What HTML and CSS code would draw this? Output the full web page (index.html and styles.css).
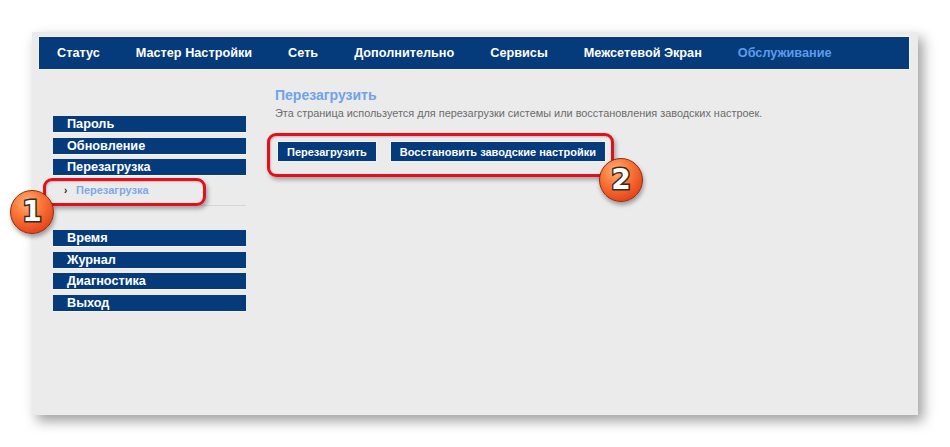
FILE: index.html
```html
<!DOCTYPE html>
<html lang="ru">
<head>
    <meta charset="UTF-8">
    <title>Перезагрузить</title>
    <link rel="stylesheet" href="styles.css">
</head>
<body>

    <div class="screen">
        <div class="panel">
            <div class="top-nav">
                <div class="nav-item">Статус</div>
                <div class="nav-item">Мастер Настройки</div>
                <div class="nav-item">Сеть</div>
                <div class="nav-item">Дополнительно</div>
                <div class="nav-item">Сервисы</div>
                <div class="nav-item">Межсетевой Экран</div>
                <div class="nav-item active">Обслуживание</div>
            </div>

            <div class="body-row">
                <div class="sidebar">
                    <div class="side-item">Пароль</div>
                    <div class="side-item">Обновление</div>
                    <div class="side-item">Перезагрузка</div>
                    <div class="sub-item">
                        <span class="sub-bullet">›</span>
                        <span class="sub-text">Перезагрузка</span>
                    </div>
                    <div class="side-sep"></div>
                    <div class="side-item">Время</div>
                    <div class="side-item">Журнал</div>
                    <div class="side-item">Диагностика</div>
                    <div class="side-item">Выход</div>
                </div>

                <div class="content">
                    <div class="page-title">Перезагрузить</div>
                    <div class="page-desc">Эта страница используется для перезагрузки системы или восстановления заводских настроек.</div>
                    <div class="btn-row">
                        <button class="btn">Перезагрузить</button>
                        <button class="btn">Восстановить заводские настройки</button>
                    </div>
                </div>
            </div>
        </div>

        <!-- annotation overlays -->
        <div class="mark mark-one"></div>
        <div class="mark mark-two"></div>
        <div class="badge badge-one"><span>1</span></div>
        <div class="badge badge-two"><span>2</span></div>
    </div>

</body>
</html>
```

FILE: styles.css
```css
body, html {
    margin: 0;
    padding: 0;
    background-color: #ffffff;
    font-family: "Liberation Sans", Arial, sans-serif;
}

.screen {
    position: relative;
    width: 950px;
    height: 447px;
    padding: 32px 0 0 32px;
    box-sizing: border-box;
    overflow: hidden;
}

.panel {
    width: 886px;
    height: 383px;
    background-color: #ebebeb;
    padding: 5px 9px 0 7px;
    box-sizing: border-box;
    box-shadow: 5px 6px 12px rgba(0, 0, 0, 0.38);
}

.top-nav {
    display: flex;
    align-items: center;
    gap: 36px;
    height: 32px;
    padding-left: 18px;
    background-color: #053a7b;
    outline: 1px solid #f4f4f4;
}

.nav-item {
    color: #ffffff;
    font-size: 12.7px;
    font-weight: bold;
    white-space: nowrap;
}

.nav-item.active {
    color: #5d9ce8;
}

.body-row {
    display: flex;
}

.sidebar {
    width: 193px;
    margin: 47px 0 0 14px;
}

.side-item {
    height: 16px;
    line-height: 16px;
    margin-bottom: 4.5px;
    padding-left: 14px;
    background-color: #053a7b;
    color: #ffffff;
    font-size: 12.7px;
    font-weight: bold;
    border-bottom: 1px solid #f5f5f5;
}

.sub-item {
    display: flex;
    align-items: center;
    height: 14px;
    margin: 7px 0 8px 11px;
}

.sub-bullet {
    color: #222222;
    font-size: 10px;
    font-weight: bold;
    width: 12px;
}

.sub-text {
    color: #7ea8e8;
    font-size: 11px;
    font-weight: bold;
}

.side-sep {
    height: 1px;
    background-color: #d6d6d6;
    margin-bottom: 24px;
}

.content {
    margin: 18px 0 0 29px;
}

.page-title {
    color: #6fa2ea;
    font-size: 14px;
    font-weight: bold;
    line-height: 17px;
}

.page-desc {
    color: #6b6b6b;
    font-size: 10.9px;
    line-height: 14px;
    margin-top: 2px;
}

.btn-row {
    display: flex;
    gap: 15px;
    margin: 22px 0 0 3px;
}

.btn {
    height: 19px;
    padding: 0 9px;
    border: none;
    border-radius: 0;
    background-color: #053a7b;
    color: #ffffff;
    font-family: "Liberation Sans", Arial, sans-serif;
    font-size: 11px;
    font-weight: bold;
    box-shadow: 0 0 0 1px #f2f2f2;
}

/* red highlight frames drawn over the screenshot */
.mark {
    position: absolute;
    border: 3px solid #e2101d;
    border-radius: 9px;
    box-shadow: 2px 3px 4px rgba(0, 0, 0, 0.3), inset 1px 1px 2px rgba(0, 0, 0, 0.2);
    box-sizing: border-box;
}

.mark-one {
    left: 43px;
    top: 178px;
    width: 163px;
    height: 28px;
}

.mark-two {
    left: 267px;
    top: 133px;
    width: 347px;
    height: 44px;
}

.badge {
    position: absolute;
    width: 44px;
    height: 44px;
    border-radius: 50%;
    box-sizing: border-box;
    border: 1.5px solid #8a2a10;
    background: radial-gradient(circle at 38% 28%, #ffb27a 0%, #fb7a3a 35%, #e8481c 75%, #c8340f 100%);
    box-shadow: 1px 3px 4px rgba(0, 0, 0, 0.35);
    display: flex;
    align-items: center;
    justify-content: center;
}

.badge span {
    font-family: "DejaVu Sans", sans-serif;
    font-size: 28px;
    font-weight: bold;
    color: #ffffff;
    -webkit-text-stroke: 3px #3a2a22;
    paint-order: stroke fill;
    line-height: 1;
}

.badge-one {
    left: 10px;
    top: 190px;
}

.badge-two {
    left: 599px;
    top: 158px;
}
```
